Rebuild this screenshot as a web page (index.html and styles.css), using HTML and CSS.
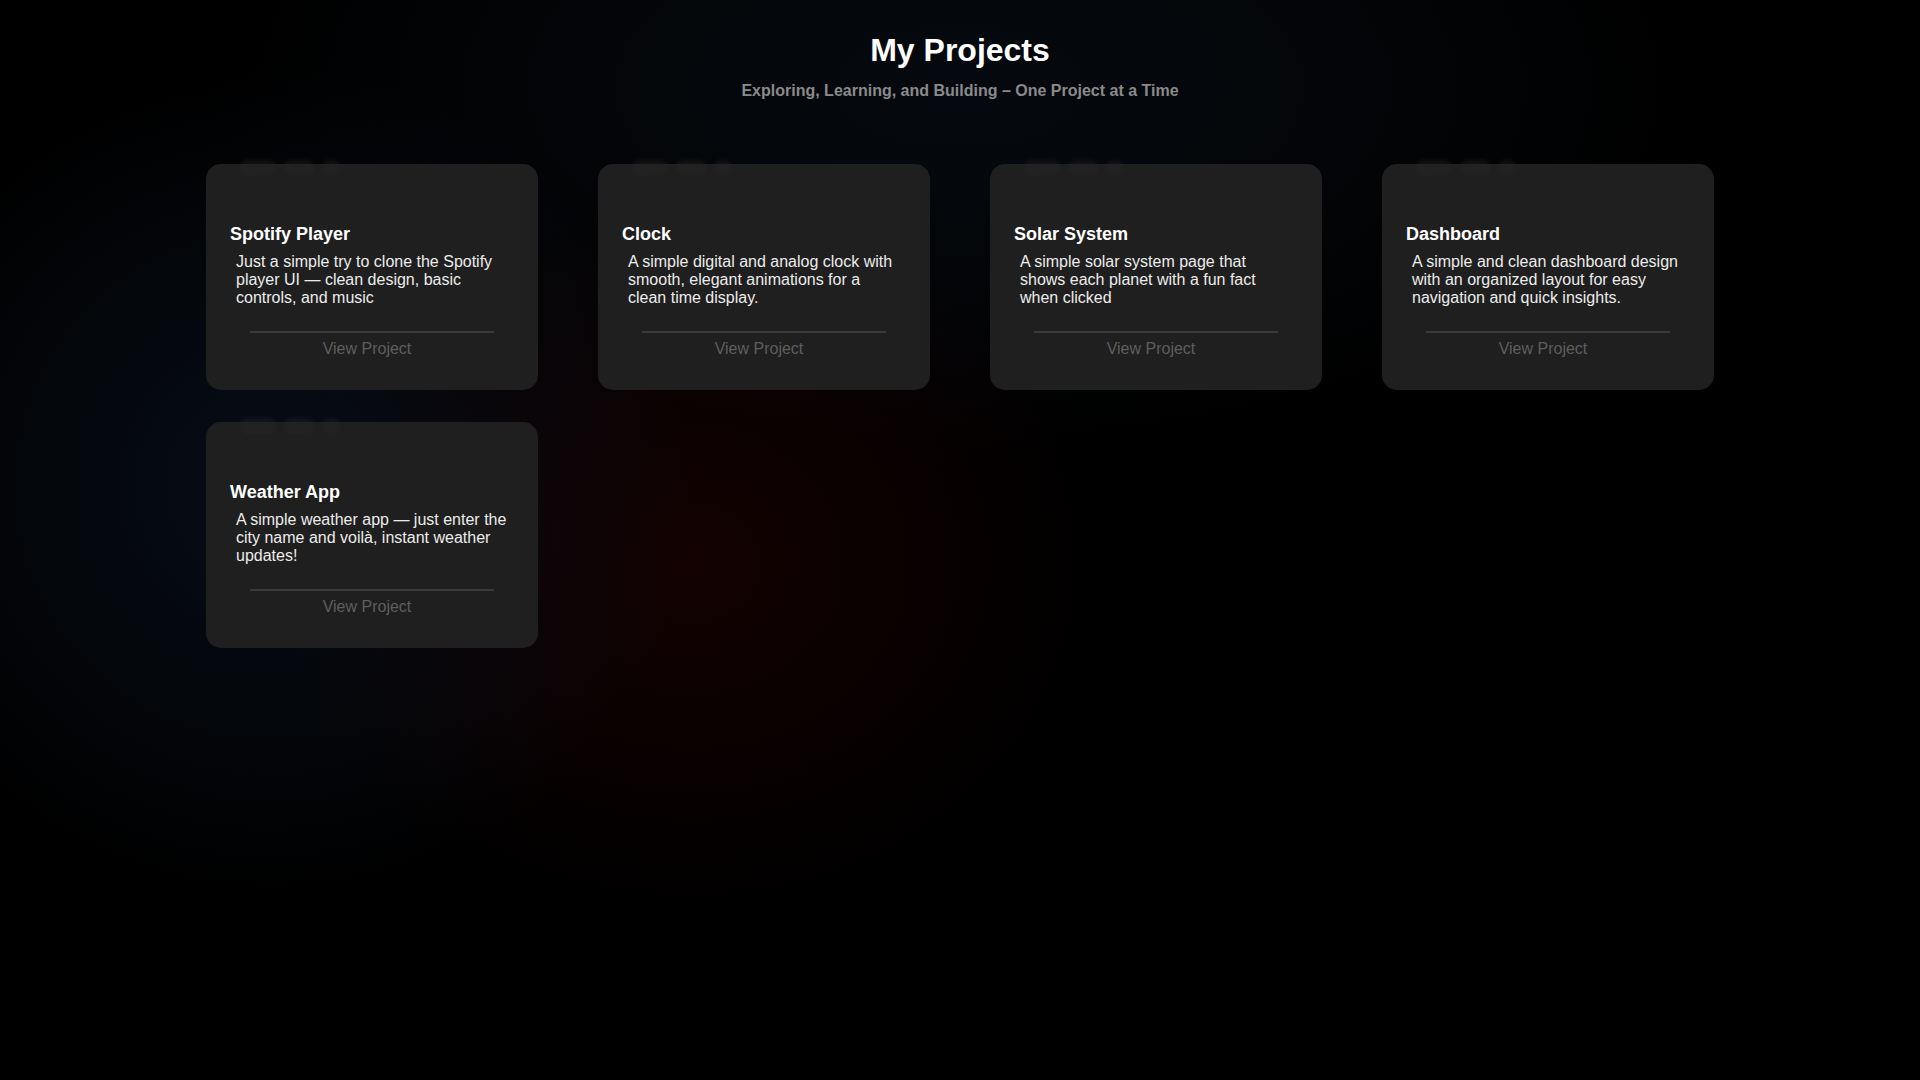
FILE: index.html
```html
<!DOCTYPE html>
<html lang="en">
<head>
  <meta charset="UTF-8">
  <meta name="viewport" content="width=device-width, initial-scale=1.0">
  <title>My Projects</title>
  <link rel="stylesheet" href="styles.css">
</head>
<body>
<div class="header">
  <h1>My Projects</h1>
  <p class="subtitle">Exploring, Learning, and Building – One Project at a Time</p>
</div>
<div class="projects">
  <div class="card">
    <div class="card-tags"><span></span><span></span><span></span></div>
    <h3>Spotify Player</h3>
    <p class="desc">Just a simple try to clone the Spotify player UI — clean design, basic controls, and music</p>
    <a class="card-link" href="#">View Project</a>
  </div>
  <div class="card">
    <div class="card-tags"><span></span><span></span><span></span></div>
    <h3>Clock</h3>
    <p class="desc">A simple digital and analog clock with smooth, elegant animations for a clean time display.</p>
    <a class="card-link" href="#">View Project</a>
  </div>
  <div class="card">
    <div class="card-tags"><span></span><span></span><span></span></div>
    <h3>Solar System</h3>
    <p class="desc">A simple solar system page that shows each planet with a fun fact when clicked</p>
    <a class="card-link" href="#">View Project</a>
  </div>
  <div class="card">
    <div class="card-tags"><span></span><span></span><span></span></div>
    <h3>Dashboard</h3>
    <p class="desc">A simple and clean dashboard design with an organized layout for easy navigation and quick insights.</p>
    <a class="card-link" href="#">View Project</a>
  </div>
  <div class="card">
    <div class="card-tags"><span></span><span></span><span></span></div>
    <h3>Weather App</h3>
    <p class="desc">A simple weather app — just enter the city name and voilà, instant weather updates!</p>
    <a class="card-link" href="#">View Project</a>
  </div>
</div>
</body>
</html>
```

FILE: styles.css
```css
* { font-family: "Liberation Sans", Arial, sans-serif; margin: 0; padding: 0; box-sizing: border-box; }
body {
  min-height: 100vh;
  color: #fff;
  background-color: #000;
  background-image:
    radial-gradient(ellipse 600px 600px at 14% 45%, rgba(12, 22, 38, 0.6), transparent 70%),
    radial-gradient(ellipse 600px 520px at 36% 52%, rgba(32, 2, 2, 0.6), transparent 70%),
    radial-gradient(ellipse 1000px 500px at 50% 8%, rgba(8, 14, 22, 0.7), transparent 75%);
}
.header { text-align: center; padding: 32px 0 64px; }
.header h1 { font-size: 32px; font-weight: bold; color: #fff; }
.subtitle { margin-top: 13px; font-size: 16px; font-weight: bold; color: #8a8a8a; }
.projects { display: grid; grid-template-columns: repeat(4, 332px); column-gap: 60px; row-gap: 32px; justify-content: center; }
.card { position: relative; background-color: #1f1f1f; border-radius: 15px; padding: 60px 24px 32px; }
.card-tags { position: absolute; top: -4px; left: 34px; display: flex; gap: 8px; opacity: 0.35; }
.card-tags span { display: block; height: 16px; border-radius: 8px; background-color: #2a2a2a; filter: blur(2px); }
.card-tags span:nth-child(1) { width: 36px; }
.card-tags span:nth-child(2) { width: 30px; }
.card-tags span:nth-child(3) { width: 18px; }
.card h3 { font-size: 18px; font-weight: bold; color: #fff; margin-bottom: 8px; }
.desc { font-size: 16px; color: #ececec; padding: 0 6px; min-height: 55px; }
.card-link { display: block; margin: 23px 20px 0; border-top: 2px solid #3b3b3b; padding: 7px 10px 0 0; text-align: center; font-size: 16px; color: #5e5e5e; text-decoration: none; }
.card-link:hover { color: #9a9a9a; }
```
